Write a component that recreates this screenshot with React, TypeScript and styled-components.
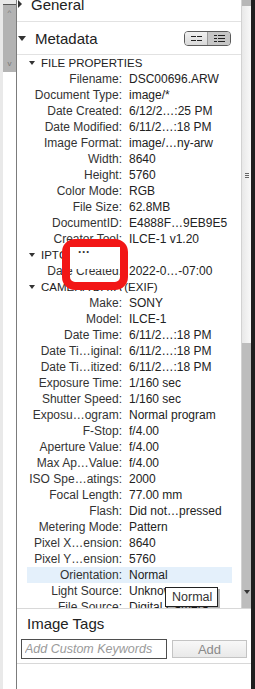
import styled, { createGlobalStyle } from "styled-components";

const GlobalStyle = createGlobalStyle`
  html, body {
    margin: 0;
    padding: 0;
    background: #ffffff;
    overflow: hidden;
  }
  body {
    font-family: "Liberation Sans", Arial, sans-serif;
    color: #222;
  }
`;

const Frame = styled.div`
  display: flex;
  width: 255px;
  height: 689px;
`;

const LeftStrip = styled.div`
  width: 13px;
  padding-left: 3px;
  background: #e9e9e9;
  border-right: 1px solid #7c7c7c;
  display: flex;
  flex-direction: column;
`;

const LeftInner = styled.div`
  flex: 1;
  background: #fff;
  border-top: 1px solid #555;
  margin-top: 4px;
`;

const LeftThumb = styled.div`
  height: 67px;
  background: #b3b3b3;
  display: flex;
  flex-direction: column;
  align-items: center;
  justify-content: space-between;
  padding: 4px 0;
  box-sizing: border-box;
  font-size: 8px;
  color: #777;
  line-height: 8px;
`;

const Main = styled.div`
  flex: 1;
  display: flex;
  flex-direction: column;
  min-width: 0;
`;

const DarkEdge = styled.div`
  width: 4px;
  background: #1f1f1f;
`;

const ScrollArea = styled.div`
  height: 608px;
  display: flex;
`;

const Content = styled.div`
  position: relative;
  flex: 1;
  overflow: hidden;
  border-right: 1px solid #d2d2d2;
`;

const Track = styled.div`
  width: 9px;
  display: flex;
  flex-direction: column;
  background: linear-gradient(to right, #e8e8e8, #f8f8f8);
`;

const TrackCap = styled.div`
  height: 6px;
  background: #b7b7b7;
`;

const Grip = styled.div`
  margin: 167px auto 0;
  width: 4px;
  height: 5px;
  background: repeating-linear-gradient(to bottom, #666 0 1px, transparent 1px 2px);
`;

const TrackThumb = styled.div`
  margin-top: 165px;
  flex: 1;
  background: #bdbdbd;
  display: flex;
  flex-direction: column;
  justify-content: flex-end;
  align-items: center;
  padding-bottom: 14px;
`;

const Triangle = styled.span<{ $size: number; $dir?: "down" | "right" }>`
  display: inline-block;
  width: 0;
  height: 0;
  flex: none;
  ${(p) =>
    p.$dir === "right"
      ? `border-top: ${p.$size * 0.6}px solid transparent;
         border-bottom: ${p.$size * 0.6}px solid transparent;
         border-left: ${p.$size * 0.6}px solid #333;`
      : `border-left: ${p.$size / 2}px solid transparent;
         border-right: ${p.$size / 2}px solid transparent;
         border-top: ${Math.round(p.$size * 0.6)}px solid #333;`}
`;

const PanelHeader = styled.div<{ $height: number; $offset?: number }>`
  display: flex;
  align-items: center;
  height: ${(p) => p.$height}px;
  margin-top: ${(p) => p.$offset || 0}px;
  padding: 0 10px 0 1px;
  border-bottom: 1px solid #e2e2e2;
  font-size: 15px;
  color: #222;
`;

const HeaderTitle = styled.span`
  margin-left: 9px;
  flex: 1;
`;

const Toggle = styled.div`
  display: flex;
  height: 13px;
  border: 1px solid #5a5a5a;
  border-radius: 4px;
  overflow: hidden;
`;

const ToggleHalf = styled.div<{ $active?: boolean }>`
  width: 22px;
  display: flex;
  align-items: center;
  justify-content: center;
  background: ${(p) =>
    p.$active ? "#c6c6c6" : "linear-gradient(#f0f0f0, #d9d9d9)"};
  & + & {
    border-left: 1px solid #9a9a9a;
  }
`;

const Rows = styled.div`
  margin: 0 9px 0 10px;
`;

const SectionRow = styled.div`
  display: flex;
  align-items: center;
  height: 16px;
  padding-left: 2px;
  font-size: 11.5px;
  span + span {
    margin-left: 6px;
  }
`;

const DataRow = styled.div<{ $selected?: boolean }>`
  display: grid;
  grid-template-columns: 95px 1fr;
  column-gap: 7px;
  height: 16px;
  line-height: 16px;
  font-size: 12px;
  white-space: nowrap;
  background: ${(p) => (p.$selected ? "#e4f0fb" : "transparent")};
`;

const Label = styled.span`
  text-align: right;
  color: #333;
`;

const Value = styled.span`
  color: #222;
  overflow: hidden;
`;

const Annotation = styled.div`
  position: absolute;
  left: 45px;
  top: 239px;
  width: 66px;
  height: 51px;
  box-sizing: border-box;
  border: 8px solid #f21616;
  border-radius: 13px;
`;

const AnnotationLabel = styled.div`
  height: 22px;
  background: #fff;
  font-size: 12px;
  font-weight: bold;
  line-height: 10px;
  padding-left: 8px;
  color: #333;
`;

const Tooltip = styled.div`
  position: absolute;
  left: 148px;
  top: 587px;
  width: 53px;
  height: 20px;
  box-sizing: border-box;
  background: #fff;
  border: 1px solid #222;
  box-shadow: 2px 2px 0 rgba(0, 0, 0, 0.3);
  font-size: 12.5px;
  line-height: 18px;
  padding-left: 6px;
  color: #333;
`;

const TagsSection = styled.div`
  border-top: 1px solid #d8d8d8;
  padding: 6px 4px 0 4px;
`;

const TagsTitle = styled.div`
  font-size: 15px;
  line-height: 18px;
  padding-left: 6px;
  color: #222;
`;

const TagsForm = styled.div`
  display: flex;
  gap: 5px;
  margin-top: 6px;
  padding-bottom: 4px;
  border-bottom: 1px solid #d8d8d8;
  margin-left: -4px;
  margin-right: -4px;
  padding-left: 4px;
  padding-right: 4px;
`;

const KeywordInput = styled.input`
  width: 146px;
  height: 20px;
  box-sizing: border-box;
  border: 1px solid #4e4e4e;
  padding: 0 3px;
  font-family: "Liberation Sans", Arial, sans-serif;
  font-size: 12.5px;
  outline: none;
  &::placeholder {
    color: #9a9a9a;
    font-style: italic;
  }
`;

const AddButton = styled.button`
  width: 75px;
  height: 18px;
  margin-top: 1px;
  box-sizing: border-box;
  border: 1px solid #c4c4c4;
  background: linear-gradient(#f8f8f8, #e9e9e9);
  color: #8a8a8a;
  font-family: "Liberation Sans", Arial, sans-serif;
  font-size: 13px;
  padding: 0;
`;

const ListIcon = ({ bullets }: { bullets: boolean }) =>
  bullets ? (
    <svg width="11" height="7" viewBox="0 0 11 7">
      {[0.5, 3.5, 6.5].map((y) => (
        <g key={y} stroke="#222" strokeWidth="1">
          <line x1="0" y1={y} x2="3" y2={y} />
          <line x1="4" y1={y} x2="11" y2={y} />
        </g>
      ))}
    </svg>
  ) : (
    <svg width="11" height="5" viewBox="0 0 11 5">
      {[0.5, 4.5].map((y) => (
        <g key={y} stroke="#222" strokeWidth="1">
          <line x1="0" y1={y} x2="5" y2={y} />
          <line x1="6" y1={y} x2="11" y2={y} />
        </g>
      ))}
    </svg>
  );

type Item =
  | { kind: "section"; title: string }
  | { kind: "row"; label: string; value: string; selected?: boolean };

const items: Item[] = [
  { kind: "section", title: "FILE PROPERTIES" },
  { kind: "row", label: "Filename:", value: "DSC00696.ARW" },
  { kind: "row", label: "Document Type:", value: "image/*" },
  { kind: "row", label: "Date Created:", value: "6/12/2…:25 PM" },
  { kind: "row", label: "Date Modified:", value: "6/11/2…:18 PM" },
  { kind: "row", label: "Image Format:", value: "image/…ny-arw" },
  { kind: "row", label: "Width:", value: "8640" },
  { kind: "row", label: "Height:", value: "5760" },
  { kind: "row", label: "Color Mode:", value: "RGB" },
  { kind: "row", label: "File Size:", value: "62.8MB" },
  { kind: "row", label: "DocumentID:", value: "E4888F…9EB9E5" },
  { kind: "row", label: "Creator Tool:", value: "ILCE-1 v1.20" },
  { kind: "section", title: "IPTC CORE" },
  { kind: "row", label: "Date Created:", value: "2022-0…-07:00" },
  { kind: "section", title: "CAMERA DATA (EXIF)" },
  { kind: "row", label: "Make:", value: "SONY" },
  { kind: "row", label: "Model:", value: "ILCE-1" },
  { kind: "row", label: "Date Time:", value: "6/11/2…:18 PM" },
  { kind: "row", label: "Date Ti…iginal:", value: "6/11/2…:18 PM" },
  { kind: "row", label: "Date Ti…itized:", value: "6/11/2…:18 PM" },
  { kind: "row", label: "Exposure Time:", value: "1/160 sec" },
  { kind: "row", label: "Shutter Speed:", value: "1/160 sec" },
  { kind: "row", label: "Exposu…ogram:", value: "Normal program" },
  { kind: "row", label: "F-Stop:", value: "f/4.00" },
  { kind: "row", label: "Aperture Value:", value: "f/4.00" },
  { kind: "row", label: "Max Ap…Value:", value: "f/4.00" },
  { kind: "row", label: "ISO Spe…atings:", value: "2000" },
  { kind: "row", label: "Focal Length:", value: "77.00 mm" },
  { kind: "row", label: "Flash:", value: "Did not…pressed" },
  { kind: "row", label: "Metering Mode:", value: "Pattern" },
  { kind: "row", label: "Pixel X…ension:", value: "8640" },
  { kind: "row", label: "Pixel Y…ension:", value: "5760" },
  { kind: "row", label: "Orientation:", value: "Normal", selected: true },
  { kind: "row", label: "Light Source:", value: "Unknown" },
  { kind: "row", label: "File Source:", value: "Digital Camera" },
];

const App = () => {
  return (
    <>
      <GlobalStyle />
      <Frame>
        <LeftStrip>
          <LeftInner>
            <LeftThumb>
              <span>^</span>
              <span>v</span>
            </LeftThumb>
          </LeftInner>
        </LeftStrip>
        <Main>
          <ScrollArea>
            <Content>
              <PanelHeader $height={34} $offset={-13}>
                <Triangle $size={7} $dir="right" />
                <HeaderTitle>General</HeaderTitle>
              </PanelHeader>
              <PanelHeader $height={32}>
                <Triangle $size={8} />
                <HeaderTitle>Metadata</HeaderTitle>
                <Toggle>
                  <ToggleHalf>
                    <ListIcon bullets={false} />
                  </ToggleHalf>
                  <ToggleHalf $active>
                    <ListIcon bullets />
                  </ToggleHalf>
                </Toggle>
              </PanelHeader>
              <Rows>
                {items.map((item, i) =>
                  item.kind === "section" ? (
                    <SectionRow key={i}>
                      <Triangle $size={7} />
                      <span>{item.title}</span>
                    </SectionRow>
                  ) : (
                    <DataRow key={i} $selected={item.selected}>
                      <Label>{item.label}</Label>
                      <Value>{item.value}</Value>
                    </DataRow>
                  )
                )}
              </Rows>
              <Annotation>
                <AnnotationLabel>···</AnnotationLabel>
              </Annotation>
              <Tooltip>Normal</Tooltip>
            </Content>
            <Track>
              <TrackCap />
              <Grip />
              <TrackThumb>
                <Triangle $size={6} />
              </TrackThumb>
            </Track>
          </ScrollArea>
          <TagsSection>
            <TagsTitle>Image Tags</TagsTitle>
            <TagsForm>
              <KeywordInput placeholder="Add Custom Keywords" />
              <AddButton>Add</AddButton>
            </TagsForm>
          </TagsSection>
        </Main>
        <DarkEdge />
      </Frame>
    </>
  );
};

export default App;
